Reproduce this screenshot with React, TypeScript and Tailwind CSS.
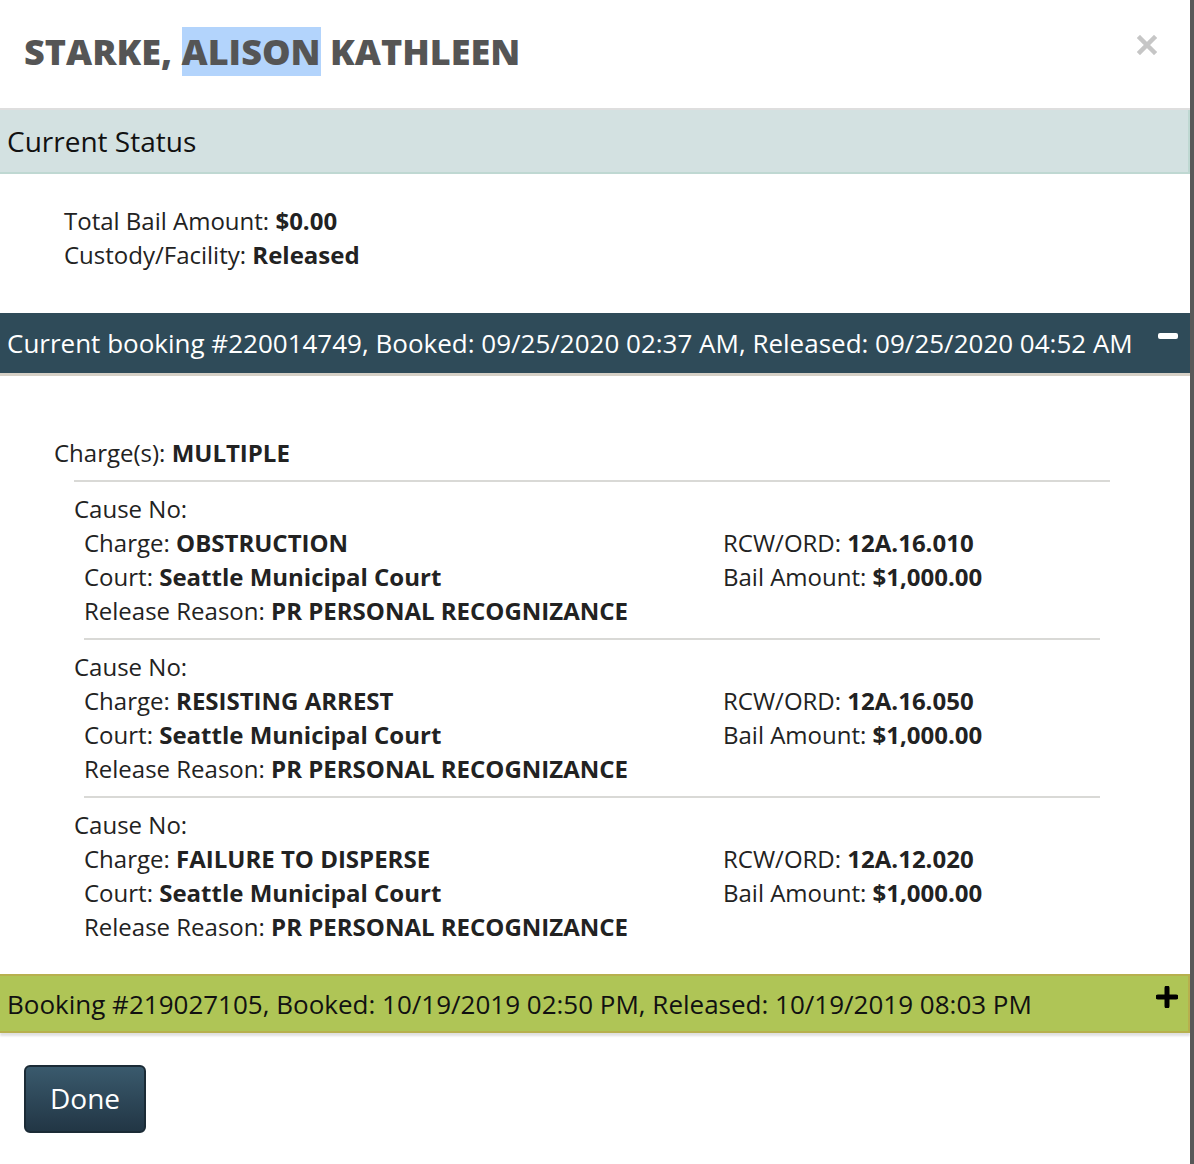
import React from "react";

const charges = [
  { charge: "OBSTRUCTION", rcw: "12A.16.010" },
  { charge: "RESISTING ARREST", rcw: "12A.16.050" },
  { charge: "FAILURE TO DISPERSE", rcw: "12A.12.020" },
];

function ChargeBlock({ charge, rcw, last }: { charge: string; rcw: string; last: boolean }) {
  return (
    <div>
      <div className="pl-[74px]">Cause No:</div>
      <div className="flex pl-[84px]">
        <div className="w-[639px]">
          <div>
            Charge: <b className="font-bold">{charge}</b>
          </div>
          <div>
            Court: <b className="font-bold">Seattle Municipal Court</b>
          </div>
          <div>
            Release Reason: <b className="font-bold">PR PERSONAL RECOGNIZANCE</b>
          </div>
        </div>
        <div>
          <div>
            RCW/ORD: <b className="font-bold">{rcw}</b>
          </div>
          <div>
            Bail Amount: <b className="font-bold">$1,000.00</b>
          </div>
        </div>
      </div>
      {!last && <div className="ml-[84px] mr-[90px] mt-[10px] mb-[10px] h-[2px] bg-[#d9d9d6]" />}
    </div>
  );
}

export default function App() {
  return (
    <div
      className="flex w-[1194px] min-h-[1164px] bg-[#585858] text-[#222] text-[24px] leading-[34px]"
      style={{ fontFamily: '"Open Sans", "Noto Sans", sans-serif' }}
    >
      <div className="w-[1190px] bg-white pb-[30px]">
        {/* Title */}
        <div className="flex h-[108px] items-center justify-between pl-[24px] pr-[33px]">
          <h1 className="text-[36px] leading-[48px] font-extrabold text-[#555] pb-[4px]">
            STARKE, <span className="bg-[#b3d4fc]">ALISON</span> KATHLEEN
          </h1>
          <svg width="20" height="20" viewBox="0 0 20 20" className="mb-[18px]">
            <path d="M3 3 L17 17 M17 3 L3 17" stroke="#c6c6c6" strokeWidth="4.5" strokeLinecap="square" />
          </svg>
        </div>

        {/* Current Status */}
        <div className="border-t-2 border-[#dedede]">
          <div className="h-[64px] bg-[#d3e1e1] border-b-2 border-r-2 border-[#bfd8d2] flex items-center pl-[7px] text-[28px] text-[#111]">
            Current Status
          </div>
        </div>
        <div className="pl-[64px] pt-[30px] pb-[41px]">
          <div>
            Total Bail Amount: <b className="font-bold">$0.00</b>
          </div>
          <div>
            Custody/Facility: <b className="font-bold">Released</b>
          </div>
        </div>

        {/* Current booking */}
        <div className="h-[63px] bg-[#2f4b59] border-b-[3px] border-[#d6d0c6] flex items-center justify-between pl-[7px] pr-[12px] text-white text-[26px]">
          <span className="whitespace-nowrap">
            Current booking #220014749, Booked: 09/25/2020 02:37 AM, Released: 09/25/2020 04:52 AM
          </span>
          <span className="block w-[20px] h-[6px] rounded-[2px] bg-white mb-[14px]" />
        </div>

        <div className="pt-[60px] pb-[30px]">
          <div className="pl-[54px]">
            Charge(s): <b className="font-bold">MULTIPLE</b>
          </div>
          <div className="ml-[74px] mr-[80px] mt-[10px] mb-[10px] h-[2px] bg-[#d9d9d6]" />
          {charges.map((c, i) => (
            <ChargeBlock key={c.rcw} charge={c.charge} rcw={c.rcw} last={i === charges.length - 1} />
          ))}
        </div>

        {/* Previous booking */}
        <div className="h-[59px] bg-[#afc556] border-y-2 border-r-2 border-[#b7b04e] shadow-[0_3px_2px_rgba(0,0,0,0.12)] flex items-center justify-between pl-[7px] pr-[10px] text-[#111] text-[26px]">
          <span className="whitespace-nowrap">Booking #219027105, Booked: 10/19/2019 02:50 PM, Released: 10/19/2019 08:03 PM</span>
          <svg width="22" height="22" viewBox="0 0 22 22" className="mb-[14px]">
            <path d="M11 2 V20 M2 11 H20" stroke="#000" strokeWidth="5" strokeLinecap="round" />
          </svg>
        </div>

        <div className="pl-[24px] pt-[32px]">
          <button className="w-[122px] h-[68px] rounded-[6px] border-2 border-[#1b2b36] bg-gradient-to-b from-[#3a5a6d] to-[#223645] text-white text-[28px] leading-none pb-[2px]">
            Done
          </button>
        </div>
      </div>
      <div className="w-[4px] bg-[#585858]" />
    </div>
  );
}
